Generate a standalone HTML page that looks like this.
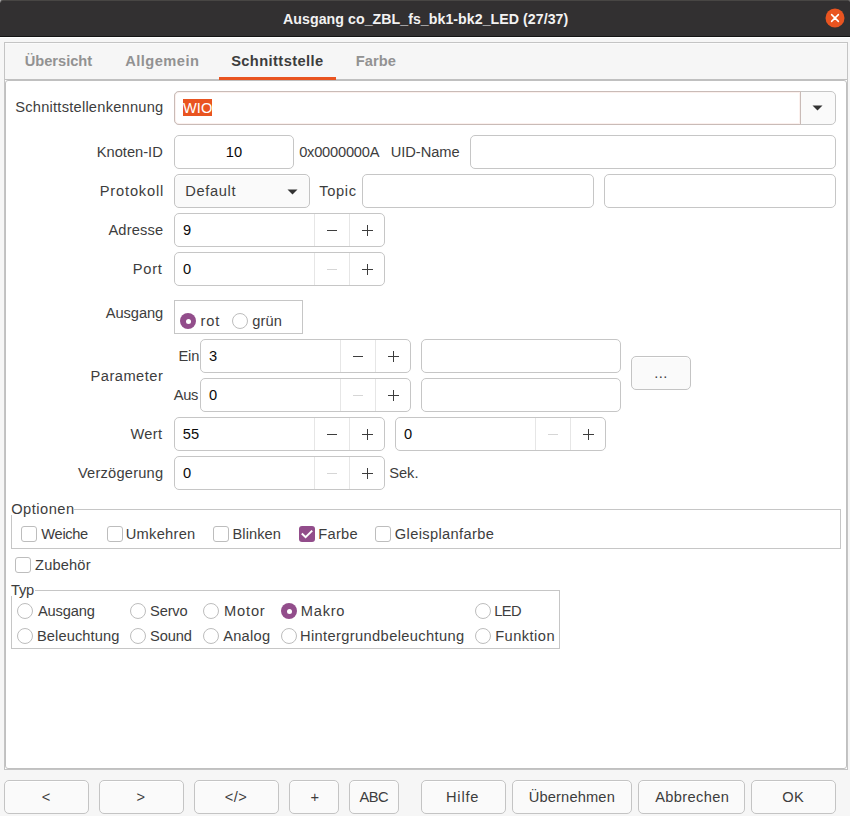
<!DOCTYPE html><html><head><meta charset="utf-8"><style>
html,body{margin:0;padding:0;}
body{width:850px;height:816px;position:relative;overflow:hidden;background:#f6f6f6;font-family:"Liberation Sans",sans-serif;}
div,svg{position:absolute;box-sizing:border-box;}
.t{font-size:14.67px;line-height:17px;white-space:pre;}
.e{background:#fff;border:1px solid #c6c6c6;border-radius:5px;}
.sep{background:#e6e6e6;}
.btn{background:#fafafa;border:1px solid #c4c4c4;border-radius:5px;box-shadow:inset 0 1px #fff;}
.rad{width:16px;height:16px;border-radius:50%;border:1px solid #bdbdbd;background:#fff;}
.rad.on{border:none;background:#924d8b;}
.rad.on:after{content:"";position:absolute;left:5.5px;top:5.5px;width:5px;height:5px;border-radius:50%;background:#fff;}
.chk{width:16px;height:16px;border-radius:3px;border:1px solid #bdbdbd;background:#fff;}
.chk.on{border:none;background:#924d8b;}
.frame{border:1px solid #c6c6c6;}
</style></head><body>
<div class="" style="left:0px;top:0px;width:850px;height:37px;background:#323031;"></div>
<div class="" style="left:0px;top:0px;width:850px;height:1px;background:#484644;"></div>
<div class="" style="left:0px;top:36px;width:850px;height:1px;background:#141414;"></div>
<div class="" style="left:0px;top:37px;width:850px;height:1px;background:#ffffff;"></div>
<div class="" style="left:0px;top:0px;width:1px;height:1px;background:#a2a2a2;"></div>
<div class="" style="left:1px;top:0px;width:1px;height:1px;background:#626060;"></div>
<div class="" style="left:0px;top:1px;width:1px;height:1px;background:#7a7878;"></div>
<div class="" style="left:2px;top:0px;width:1px;height:1px;background:#504e4c;"></div>
<div class="" style="left:0px;top:2px;width:1px;height:1px;background:#4e4c4c;"></div>
<div class="" style="left:1px;top:1px;width:1px;height:1px;background:#403e3e;"></div>
<div class="" style="left:849px;top:0px;width:1px;height:1px;background:#6e6e6e;"></div>
<div class="" style="left:848px;top:0px;width:1px;height:1px;background:#585654;"></div>
<div class="" style="left:849px;top:1px;width:1px;height:1px;background:#4e4c4c;"></div>
<div id="t0" class="t" style="left:283.08px;top:11.00px;color:#f2f2f2;font-weight:700;font-size:14.2px;letter-spacing:0.036px;">Ausgang co_ZBL_fs_bk1-bk2_LED (27/37)</div>
<svg style="left:825px;top:8px" width="20" height="20" viewBox="0 0 20 20"><circle cx="10" cy="10" r="9.5" fill="#e95420"/><path d="M6.6 6.6 L13.4 13.4 M13.4 6.6 L6.6 13.4" stroke="#fff" stroke-width="1.5" stroke-linecap="round"/></svg>
<div class="" style="left:4px;top:42px;width:844px;height:728px;background:#fff;border:1px solid #c4c4c4;"></div>
<div class="" style="left:5px;top:43px;width:842px;height:37px;background:#f6f6f6;border-top:1px solid #fbfbfb;border-bottom:1px solid #c0c0c0;"></div>
<div class="" style="left:5px;top:80px;width:842px;height:689px;background:#fff;border:1px solid #c0c0c0;border-radius:3px;"></div>
<div id="t1" class="t" style="left:24.76px;top:53.00px;color:#929292;font-weight:700;font-size:14.67px;letter-spacing:-0.025px;">Übersicht</div>
<div id="t2" class="t" style="left:125.13px;top:53.00px;color:#929292;font-weight:700;font-size:14.67px;letter-spacing:0.475px;">Allgemein</div>
<div id="t3" class="t" style="left:231.13px;top:53.00px;color:#3d3d3d;font-weight:700;font-size:14.67px;letter-spacing:0.408px;">Schnittstelle</div>
<div id="t4" class="t" style="left:355.76px;top:53.00px;color:#929292;font-weight:700;font-size:14.67px;letter-spacing:0.075px;">Farbe</div>
<div class="" style="left:219px;top:77px;width:117px;height:3px;background:#e95420;"></div>
<div id="t5" class="t" style="left:15.24px;top:99.00px;color:#3d3d3d;font-weight:400;font-size:14.67px;letter-spacing:0.230px;">Schnittstellenkennung</div>
<div class="" style="left:174px;top:91px;width:662px;height:34px;background:#fafafa;border:1px solid #c6c6c6;border-radius:5px;"></div>
<div class="" style="left:174px;top:91px;width:627px;height:34px;background:#fff;border:1px solid #c9bbb7;border-radius:5px 0 0 5px;box-shadow:inset 0 0 0 1px #fcf1ee;"></div>
<div class="" style="left:183px;top:99px;width:29px;height:17px;background:#e95420;"></div>
<div id="t6" class="t" style="left:183px;top:100.00px;color:#fff;font-weight:400;font-size:14.67px;">WIO</div>
<svg class="ic" style="left:812px;top:105px" width="11" height="6" viewBox="0 0 11 6"><path d="M0.5 0.5 L10.5 0.5 L5.5 5.5 Z" fill="#333"/></svg>
<div id="t7" class="t" style="left:96.74px;top:144.00px;color:#3d3d3d;font-weight:400;font-size:14.67px;letter-spacing:0.000px;">Knoten-ID</div>
<div class="e" style="left:174px;top:135px;width:120px;height:34px;"></div>
<div id="t8" class="t" style="left:225.70px;top:144.00px;color:#0a0a0a;font-weight:400;font-size:14.67px;letter-spacing:0.100px;">10</div>
<div id="t9" class="t" style="left:299.13px;top:144.00px;color:#3d3d3d;font-weight:400;font-size:14.67px;letter-spacing:-0.222px;">0x0000000A</div>
<div id="t10" class="t" style="left:390.76px;top:144.00px;color:#3d3d3d;font-weight:400;font-size:14.67px;letter-spacing:-0.043px;">UID-Name</div>
<div class="e" style="left:470px;top:135px;width:366px;height:34px;"></div>
<div id="t11" class="t" style="left:99.80px;top:183.00px;color:#3d3d3d;font-weight:400;font-size:14.67px;letter-spacing:0.800px;">Protokoll</div>
<div class="btn" style="left:174px;top:174px;width:136px;height:34px;"></div>
<div id="t12" class="t" style="left:185.16px;top:183.00px;color:#3d3d3d;font-weight:400;font-size:14.67px;letter-spacing:0.650px;">Default</div>
<svg class="ic" style="left:287px;top:189px" width="11" height="6" viewBox="0 0 11 6"><path d="M0.5 0.5 L10.5 0.5 L5.5 5.5 Z" fill="#333"/></svg>
<div id="t13" class="t" style="left:319.16px;top:183.00px;color:#3d3d3d;font-weight:400;font-size:14.67px;letter-spacing:0.650px;">Topic</div>
<div class="e" style="left:362px;top:174px;width:232px;height:34px;"></div>
<div class="e" style="left:604px;top:174px;width:232px;height:34px;"></div>
<div id="t14" class="t" style="left:108.38px;top:222.00px;color:#3d3d3d;font-weight:400;font-size:14.67px;letter-spacing:0.167px;">Adresse</div>
<div class="e" style="left:174px;top:213px;width:211px;height:34px;"></div>
<div class="sep" style="left:314px;top:214px;width:1px;height:32px;"></div>
<div class="sep" style="left:349px;top:214px;width:1px;height:32px;"></div>
<div class="ic" style="left:327px;top:229.5px;width:10px;height:1.3px;background:#3d3d3d"></div>
<div class="ic" style="left:362px;top:229.5px;width:11px;height:1.3px;background:#3d3d3d"></div>
<div class="ic" style="left:366.5px;top:225.0px;width:1.3px;height:11px;background:#3d3d3d"></div>
<div id="t15" class="t" style="left:183.07px;top:222.00px;color:#0a0a0a;font-weight:400;font-size:14.67px;letter-spacing:0.000px;">9</div>
<div id="t16" class="t" style="left:132.66px;top:261.00px;color:#3d3d3d;font-weight:400;font-size:14.67px;letter-spacing:0.800px;">Port</div>
<div class="e" style="left:174px;top:252px;width:211px;height:34px;"></div>
<div class="sep" style="left:314px;top:253px;width:1px;height:32px;"></div>
<div class="sep" style="left:349px;top:253px;width:1px;height:32px;"></div>
<div class="ic" style="left:327px;top:268.5px;width:10px;height:1.3px;background:#d6d6d6"></div>
<div class="ic" style="left:362px;top:268.5px;width:11px;height:1.3px;background:#3d3d3d"></div>
<div class="ic" style="left:366.5px;top:264.0px;width:1.3px;height:11px;background:#3d3d3d"></div>
<div id="t17" class="t" style="left:183px;top:261.00px;color:#0a0a0a;font-weight:400;font-size:14.67px;">0</div>
<div id="t18" class="t" style="left:105.80px;top:305.00px;color:#3d3d3d;font-weight:400;font-size:14.67px;letter-spacing:-0.067px;">Ausgang</div>
<div class="frame" style="left:174px;top:300px;width:129px;height:34px;"></div>
<div class="rad on" style="left:180px;top:313px"></div>
<div id="t19" class="t" style="left:200.55px;top:313.00px;color:#3d3d3d;font-weight:400;font-size:14.67px;letter-spacing:0.800px;">rot</div>
<div class="rad" style="left:232px;top:313px"></div>
<div id="t20" class="t" style="left:252.36px;top:313.00px;color:#3d3d3d;font-weight:400;font-size:14.67px;letter-spacing:0.100px;">grün</div>
<div id="t21" class="t" style="left:90.55px;top:368.00px;color:#3d3d3d;font-weight:400;font-size:14.67px;letter-spacing:0.475px;">Parameter</div>
<div id="t22" class="t" style="left:178.56px;top:348.00px;color:#3d3d3d;font-weight:400;font-size:14.67px;letter-spacing:-0.200px;">Ein</div>
<div class="e" style="left:200px;top:339px;width:211px;height:34px;"></div>
<div class="sep" style="left:340px;top:340px;width:1px;height:32px;"></div>
<div class="sep" style="left:375px;top:340px;width:1px;height:32px;"></div>
<div class="ic" style="left:353px;top:355.5px;width:10px;height:1.3px;background:#3d3d3d"></div>
<div class="ic" style="left:388px;top:355.5px;width:11px;height:1.3px;background:#3d3d3d"></div>
<div class="ic" style="left:392.5px;top:351.0px;width:1.3px;height:11px;background:#3d3d3d"></div>
<div id="t23" class="t" style="left:209px;top:348.00px;color:#0a0a0a;font-weight:400;font-size:14.67px;">3</div>
<div id="t24" class="t" style="left:173.72px;top:387.00px;color:#3d3d3d;font-weight:400;font-size:14.67px;letter-spacing:-0.300px;">Aus</div>
<div class="e" style="left:200px;top:378px;width:211px;height:34px;"></div>
<div class="sep" style="left:340px;top:379px;width:1px;height:32px;"></div>
<div class="sep" style="left:375px;top:379px;width:1px;height:32px;"></div>
<div class="ic" style="left:353px;top:394.5px;width:10px;height:1.3px;background:#d6d6d6"></div>
<div class="ic" style="left:388px;top:394.5px;width:11px;height:1.3px;background:#3d3d3d"></div>
<div class="ic" style="left:392.5px;top:390.0px;width:1.3px;height:11px;background:#3d3d3d"></div>
<div id="t25" class="t" style="left:209px;top:387.00px;color:#0a0a0a;font-weight:400;font-size:14.67px;">0</div>
<div class="e" style="left:421px;top:339px;width:200px;height:34px;"></div>
<div class="e" style="left:421px;top:378px;width:200px;height:34px;"></div>
<div class="btn" style="left:631px;top:356px;width:60px;height:34px;"></div>
<div id="t26" class="t" style="left:654.13px;top:365.00px;color:#3d3d3d;font-weight:400;font-size:14.67px;letter-spacing:0.500px;">...</div>
<div id="t27" class="t" style="left:130.47px;top:426.00px;color:#3d3d3d;font-weight:400;font-size:14.67px;letter-spacing:0.333px;">Wert</div>
<div class="e" style="left:174px;top:417px;width:211px;height:34px;"></div>
<div class="sep" style="left:314px;top:418px;width:1px;height:32px;"></div>
<div class="sep" style="left:349px;top:418px;width:1px;height:32px;"></div>
<div class="ic" style="left:327px;top:433.5px;width:10px;height:1.3px;background:#3d3d3d"></div>
<div class="ic" style="left:362px;top:433.5px;width:11px;height:1.3px;background:#3d3d3d"></div>
<div class="ic" style="left:366.5px;top:429.0px;width:1.3px;height:11px;background:#3d3d3d"></div>
<div id="t28" class="t" style="left:182.86px;top:426.00px;color:#0a0a0a;font-weight:400;font-size:14.67px;letter-spacing:-0.000px;">55</div>
<div class="e" style="left:395px;top:417px;width:211px;height:34px;"></div>
<div class="sep" style="left:535px;top:418px;width:1px;height:32px;"></div>
<div class="sep" style="left:570px;top:418px;width:1px;height:32px;"></div>
<div class="ic" style="left:548px;top:433.5px;width:10px;height:1.3px;background:#d6d6d6"></div>
<div class="ic" style="left:583px;top:433.5px;width:11px;height:1.3px;background:#3d3d3d"></div>
<div class="ic" style="left:587.5px;top:429.0px;width:1.3px;height:11px;background:#3d3d3d"></div>
<div id="t29" class="t" style="left:404px;top:426.00px;color:#0a0a0a;font-weight:400;font-size:14.67px;">0</div>
<div id="t30" class="t" style="left:77.92px;top:465.00px;color:#3d3d3d;font-weight:400;font-size:14.67px;letter-spacing:0.210px;">Verzögerung</div>
<div class="e" style="left:174px;top:456px;width:211px;height:34px;"></div>
<div class="sep" style="left:314px;top:457px;width:1px;height:32px;"></div>
<div class="sep" style="left:349px;top:457px;width:1px;height:32px;"></div>
<div class="ic" style="left:327px;top:472.5px;width:10px;height:1.3px;background:#d6d6d6"></div>
<div class="ic" style="left:362px;top:472.5px;width:11px;height:1.3px;background:#3d3d3d"></div>
<div class="ic" style="left:366.5px;top:468.0px;width:1.3px;height:11px;background:#3d3d3d"></div>
<div id="t31" class="t" style="left:183px;top:465.00px;color:#0a0a0a;font-weight:400;font-size:14.67px;">0</div>
<div id="t32" class="t" style="left:389.24px;top:465.00px;color:#3d3d3d;font-weight:400;font-size:14.67px;letter-spacing:-0.033px;">Sek.</div>
<div class="frame" style="left:11px;top:509px;width:830px;height:40px;"></div>
<div class="" style="left:11px;top:500px;width:63px;height:15px;background:#fff;"></div>
<div id="t33" class="t" style="left:11.16px;top:501.00px;color:#3d3d3d;font-weight:400;font-size:14.67px;letter-spacing:0.500px;">Optionen</div>
<div class="chk" style="left:21px;top:526px"></div>
<div id="t34" class="t" style="left:41.35px;top:526.00px;color:#3d3d3d;font-weight:400;font-size:14.67px;letter-spacing:-0.340px;">Weiche</div>
<div class="chk" style="left:107px;top:526px"></div>
<div id="t35" class="t" style="left:125.76px;top:526.00px;color:#3d3d3d;font-weight:400;font-size:14.67px;letter-spacing:0.271px;">Umkehren</div>
<div class="chk" style="left:213px;top:526px"></div>
<div id="t36" class="t" style="left:232.51px;top:526.00px;color:#3d3d3d;font-weight:400;font-size:14.67px;letter-spacing:0.050px;">Blinken</div>
<div class="chk on" style="left:299px;top:526px"><svg width="16" height="16" viewBox="0 0 16 16" style="position:absolute;left:0;top:0"><path d="M2.8 7.6 L6.6 11.2 L13.2 4.6" fill="none" stroke="#fff" stroke-width="2"/></svg></div>
<div id="t37" class="t" style="left:318.36px;top:526.00px;color:#3d3d3d;font-weight:400;font-size:14.67px;letter-spacing:0.250px;">Farbe</div>
<div class="chk" style="left:375px;top:526px"></div>
<div id="t38" class="t" style="left:394.76px;top:526.00px;color:#3d3d3d;font-weight:400;font-size:14.67px;letter-spacing:0.362px;">Gleisplanfarbe</div>
<div class="chk" style="left:15px;top:557px"></div>
<div id="t39" class="t" style="left:35.05px;top:557.00px;color:#3d3d3d;font-weight:400;font-size:14.67px;letter-spacing:0.150px;">Zubehör</div>
<div class="frame" style="left:11px;top:590px;width:549px;height:59px;"></div>
<div class="" style="left:11px;top:580px;width:24px;height:16px;background:#fff;"></div>
<div id="t40" class="t" style="left:11.00px;top:582.00px;color:#3d3d3d;font-weight:400;font-size:14.67px;letter-spacing:-0.250px;">Typ</div>
<div class="rad" style="left:17px;top:603px"></div>
<div id="t41" class="t" style="left:38.00px;top:603.00px;color:#3d3d3d;font-weight:400;font-size:14.67px;letter-spacing:-0.167px;">Ausgang</div>
<div class="rad" style="left:130px;top:603px"></div>
<div id="t42" class="t" style="left:150.00px;top:603.00px;color:#3d3d3d;font-weight:400;font-size:14.67px;letter-spacing:-0.150px;">Servo</div>
<div class="rad" style="left:203px;top:603px"></div>
<div id="t43" class="t" style="left:224.06px;top:603.00px;color:#3d3d3d;font-weight:400;font-size:14.67px;letter-spacing:0.800px;">Motor</div>
<div class="rad on" style="left:281px;top:603px"></div>
<div id="t44" class="t" style="left:300.78px;top:603.00px;color:#3d3d3d;font-weight:400;font-size:14.67px;letter-spacing:0.750px;">Makro</div>
<div class="rad" style="left:475px;top:603px"></div>
<div id="t45" class="t" style="left:494.19px;top:603.00px;color:#3d3d3d;font-weight:400;font-size:14.67px;letter-spacing:-0.600px;">LED</div>
<div class="rad" style="left:17px;top:628px"></div>
<div id="t46" class="t" style="left:37.00px;top:628.00px;color:#3d3d3d;font-weight:400;font-size:14.67px;letter-spacing:0.090px;">Beleuchtung</div>
<div class="rad" style="left:130px;top:628px"></div>
<div id="t47" class="t" style="left:150.00px;top:628.00px;color:#3d3d3d;font-weight:400;font-size:14.67px;letter-spacing:-0.150px;">Sound</div>
<div class="rad" style="left:203px;top:628px"></div>
<div id="t48" class="t" style="left:223.13px;top:628.00px;color:#3d3d3d;font-weight:400;font-size:14.67px;letter-spacing:0.280px;">Analog</div>
<div class="rad" style="left:281px;top:628px"></div>
<div id="t49" class="t" style="left:300.00px;top:628.00px;color:#3d3d3d;font-weight:400;font-size:14.67px;letter-spacing:0.367px;">Hintergrundbeleuchtung</div>
<div class="rad" style="left:475px;top:628px"></div>
<div id="t50" class="t" style="left:495.13px;top:628.00px;color:#3d3d3d;font-weight:400;font-size:14.67px;letter-spacing:0.457px;">Funktion</div>
<div class="btn" style="left:4px;top:780px;width:85px;height:34px;"></div>
<div id="t51" class="t" style="left:41.72px;top:789.00px;color:#3d3d3d;font-weight:400;font-size:14.67px;letter-spacing:0.000px;">&lt;</div>
<div class="btn" style="left:99px;top:780px;width:85px;height:34px;"></div>
<div id="t52" class="t" style="left:136.38px;top:789.00px;color:#3d3d3d;font-weight:400;font-size:14.67px;letter-spacing:0.000px;">&gt;</div>
<div class="btn" style="left:194px;top:780px;width:85px;height:34px;"></div>
<div id="t53" class="t" style="left:224.75px;top:789.00px;color:#3d3d3d;font-weight:400;font-size:14.67px;letter-spacing:0.450px;">&lt;/&gt;</div>
<div class="btn" style="left:289px;top:780px;width:50px;height:34px;"></div>
<div id="t54" class="t" style="left:310.38px;top:789.00px;color:#3d3d3d;font-weight:400;font-size:14.67px;letter-spacing:0.000px;">+</div>
<div class="btn" style="left:349px;top:780px;width:50px;height:34px;"></div>
<div id="t55" class="t" style="left:359.54px;top:789.00px;color:#3d3d3d;font-weight:400;font-size:14.67px;letter-spacing:-0.600px;">ABC</div>
<div class="btn" style="left:421px;top:780px;width:85px;height:34px;"></div>
<div id="t56" class="t" style="left:445.99px;top:789.00px;color:#3d3d3d;font-weight:400;font-size:14.67px;letter-spacing:0.800px;">Hilfe</div>
<div class="btn" style="left:512px;top:780px;width:120px;height:34px;"></div>
<div id="t57" class="t" style="left:528.79px;top:789.00px;color:#3d3d3d;font-weight:400;font-size:14.67px;letter-spacing:0.144px;">Übernehmen</div>
<div class="btn" style="left:638px;top:780px;width:107px;height:34px;"></div>
<div id="t58" class="t" style="left:655.21px;top:789.00px;color:#3d3d3d;font-weight:400;font-size:14.67px;letter-spacing:0.338px;">Abbrechen</div>
<div class="btn" style="left:751px;top:780px;width:85px;height:34px;"></div>
<div id="t59" class="t" style="left:782.28px;top:789.00px;color:#3d3d3d;font-weight:400;font-size:14.67px;letter-spacing:0.400px;">OK</div>
</body></html>
